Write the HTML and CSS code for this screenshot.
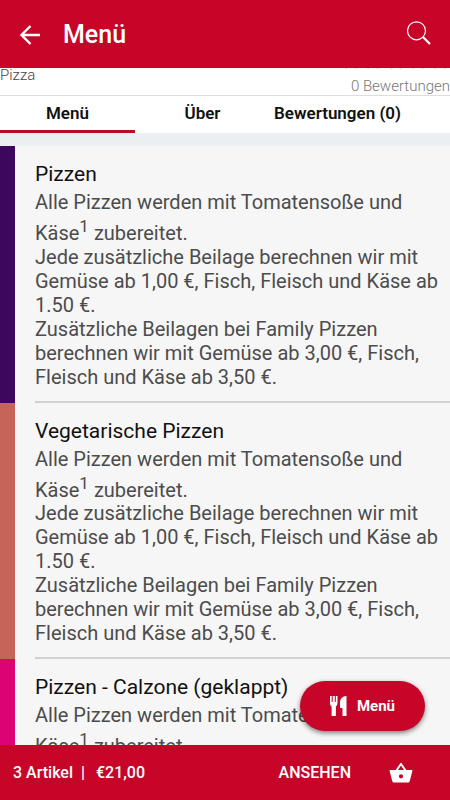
FILE: index.html
```html
<!DOCTYPE html>
<html lang="de">
<head>
<meta charset="utf-8">
<meta name="viewport" content="width=device-width, initial-scale=1">
<title>Menü</title>
<link rel="stylesheet" href="styles.css">
</head>
<body>
<header class="topbar">
  <button class="icon-button" type="button" aria-label="Zurück">
    <svg width="22" height="24" viewBox="0 0 22 24" fill="none" stroke="#fff" stroke-width="2.400"><path d="M11.500 4 2.500 13l9 9M2.500 13H21"/></svg>
  </button>
  <h1 class="topbar-title">Menü</h1>
  <button class="icon-button" type="button" aria-label="Suchen">
    <svg width="24" height="26" viewBox="0 0 24 26" fill="none" stroke="#fff"><circle cx="9.500" cy="9.800" r="9" stroke-width="1.200"/><path d="m16 16 7 7" stroke-width="2.200"/></svg>
  </button>
</header>

<main class="content">
  <section class="info">
    <p class="cuisine">Pizza</p>
    <div class="rating">
      <svg class="stars" width="108" height="18" viewBox="0 0 108 18" fill="none" stroke="#e4d4d8" aria-hidden="true">
        <defs><path id="star" d="m9 1 2.300 5.600 6 .4-4.600 3.900 1.500 5.900L9 13.600l-5.200 3.200 1.500-5.900L.7 7l6-.4z"/></defs>
        <use href="#star"/><use href="#star" x="22"/><use href="#star" x="45"/><use href="#star" x="67"/><use href="#star" x="89"/>
      </svg>
      <p class="reviews">0 Bewertungen</p>
    </div>
  </section>

  <nav class="tabs">
    <a class="tab active" href="#menu" aria-current="page">Menü</a>
    <a class="tab" href="#about">Über</a>
    <a class="tab" href="#reviews">Bewertungen (0)</a>
  </nav>

  <div class="categories" id="menu">
    <article class="category purple">
      <div class="category-body">
        <h2>Pizzen</h2>
        <p>Alle Pizzen werden mit Tomatensoße und Käse<sup>1</sup> zubereitet.<br>Jede zusätzliche Beilage berechnen wir mit Gemüse ab 1,00 €, Fisch, Fleisch und Käse ab 1.50 €.<br>Zusätzliche Beilagen bei Family Pizzen berechnen wir mit Gemüse ab 3,00 €, Fisch, Fleisch und Käse ab 3,50 €.</p>
      </div>
    </article>
    <article class="category coral">
      <div class="category-body">
        <h2>Vegetarische Pizzen</h2>
        <p>Alle Pizzen werden mit Tomatensoße und Käse<sup>1</sup> zubereitet.<br>Jede zusätzliche Beilage berechnen wir mit Gemüse ab 1,00 €, Fisch, Fleisch und Käse ab 1.50 €.<br>Zusätzliche Beilagen bei Family Pizzen berechnen wir mit Gemüse ab 3,00 €, Fisch, Fleisch und Käse ab 3,50 €.</p>
      </div>
    </article>
    <article class="category pink">
      <div class="category-body">
        <h2>Pizzen - Calzone (geklappt)</h2>
        <p>Alle Pizzen werden mit Tomatensoße und Käse<sup>1</sup> zubereitet.</p>
      </div>
    </article>
  </div>
</main>

<footer class="cart">
  <button class="menu-fab" type="button">
    <svg width="18" height="20" viewBox="0 0 18 20" fill="#fff" aria-hidden="true"><path d="M0 0h1.700v6h1V0h2.100v6h1V0h1.700v7c0 1.800-.6 2.800-1.600 3.400V20H1.600V10.400C.6 9.800 0 8.800 0 7zM16.500 0v20h-4v-8H10V6.500C10 3 12.500 0 16.500 0z"/></svg>
    <span>Menü</span>
  </button>
  <p class="cart-total"><span>3 Artikel</span><span class="bar">|</span><span>€21,00</span></p>
  <button class="cart-view" type="button">
    <span>ANSEHEN</span>
    <svg width="24" height="22" viewBox="0 0 24 22" fill="#fff" aria-hidden="true"><path fill-rule="evenodd" d="M17.400 8 12.800 1.400a1 1 0 0 0-1.600 0L6.600 8H1.500c-.6 0-1 .5-.9 1.100l2.700 10.100c.3.800 1 1.400 1.900 1.400h13.600c.9 0 1.600-.6 1.900-1.400l2.700-10.100c.1-.6-.3-1.100-.9-1.100zM9 8l3-4.400L15 8zm3 8.400a2.100 2.100 0 1 1 0-4.200 2.100 2.100 0 0 1 0 4.200z"/></svg>
  </button>
</footer>
</body>
</html>
```
FILE: styles.css
```css
* { box-sizing: border-box; }

body {
  margin: 0;
  height: 100vh;
  display: flex;
  flex-direction: column;
  background: #eceff1;
  color: #111;
  font-family: Roboto, "Liberation Sans", sans-serif;
}

h1, h2, p { margin: 0; }

button {
  border: 0;
  padding: 0;
  background: none;
  color: inherit;
  font: inherit;
}

svg { display: block; }

.topbar {
  flex: none;
  display: flex;
  align-items: center;
  gap: 22px;
  height: 68px;
  padding: 0 19px;
  background: #c60529;
  color: #fff;
}

.topbar-title {
  flex: 1;
  font-size: 25px;
  font-weight: 500;
}

.content {
  flex: 1;
  min-height: 0;
  overflow: hidden;
}

.info {
  display: flex;
  justify-content: space-between;
  align-items: flex-end;
  height: 28px;
  overflow: hidden;
  border-bottom: 1px solid #dedede;
  background: #fff;
  font-size: 15px;
  font-weight: 300;
  line-height: 18px;
}

.cuisine { padding-bottom: 11px; color: #444; }
.rating { color: #777; text-align: right; }
.stars { margin: 0 0 7px auto; }

.tabs {
  display: flex;
  height: 37px;
  padding-right: 10%;
  background: #fff;
}

.tab {
  flex: 1 1 0;
  display: flex;
  align-items: center;
  justify-content: center;
  border-bottom: 3px solid transparent;
  color: #111;
  font-size: 17px;
  font-weight: 600;
  text-decoration: none;
  white-space: nowrap;
}

.tab.active { border-bottom-color: #b80d20; }

.categories { margin-top: 13px; }

.category {
  padding-left: 20px;
  border-left: 15px solid;
  background: #f6f6f6;
}

.purple { border-left-color: #3c075d; }
.coral { border-left-color: #c46557; }
.pink { border-left-color: #dc0474; }

.category-body {
  padding: 16px 0 12px;
  border-bottom: 2px solid #d0d0d2;
}

.category h2 {
  margin-bottom: 4px;
  color: #111;
  font-size: 21px;
  font-weight: 400;
  line-height: 24px;
}

.category p {
  padding-right: 8px;
  color: #4c4c4c;
  font-size: 20px;
  line-height: 24px;
}

.category sup { font-size: 17px; }

.cart {
  position: relative;
  flex: none;
  display: flex;
  align-items: center;
  justify-content: space-between;
  height: 55px;
  padding: 0 37px 0 13px;
  background: #c60529;
  color: #fff;
  font-size: 16px;
  font-weight: 500;
}

.cart-total { display: flex; gap: 8px; }
.bar { margin-right: 3px; }

.cart-view {
  display: flex;
  align-items: center;
  gap: 38px;
}

.menu-fab {
  position: absolute;
  right: 25px;
  bottom: 69px;
  display: flex;
  align-items: center;
  justify-content: center;
  gap: 9px;
  width: 125px;
  height: 50px;
  border-radius: 25px;
  background: #c60529;
  box-shadow: 0 2px 5px rgba(0, 0, 0, 0.5);
  font-size: 15px;
  font-weight: 700;
}
```
